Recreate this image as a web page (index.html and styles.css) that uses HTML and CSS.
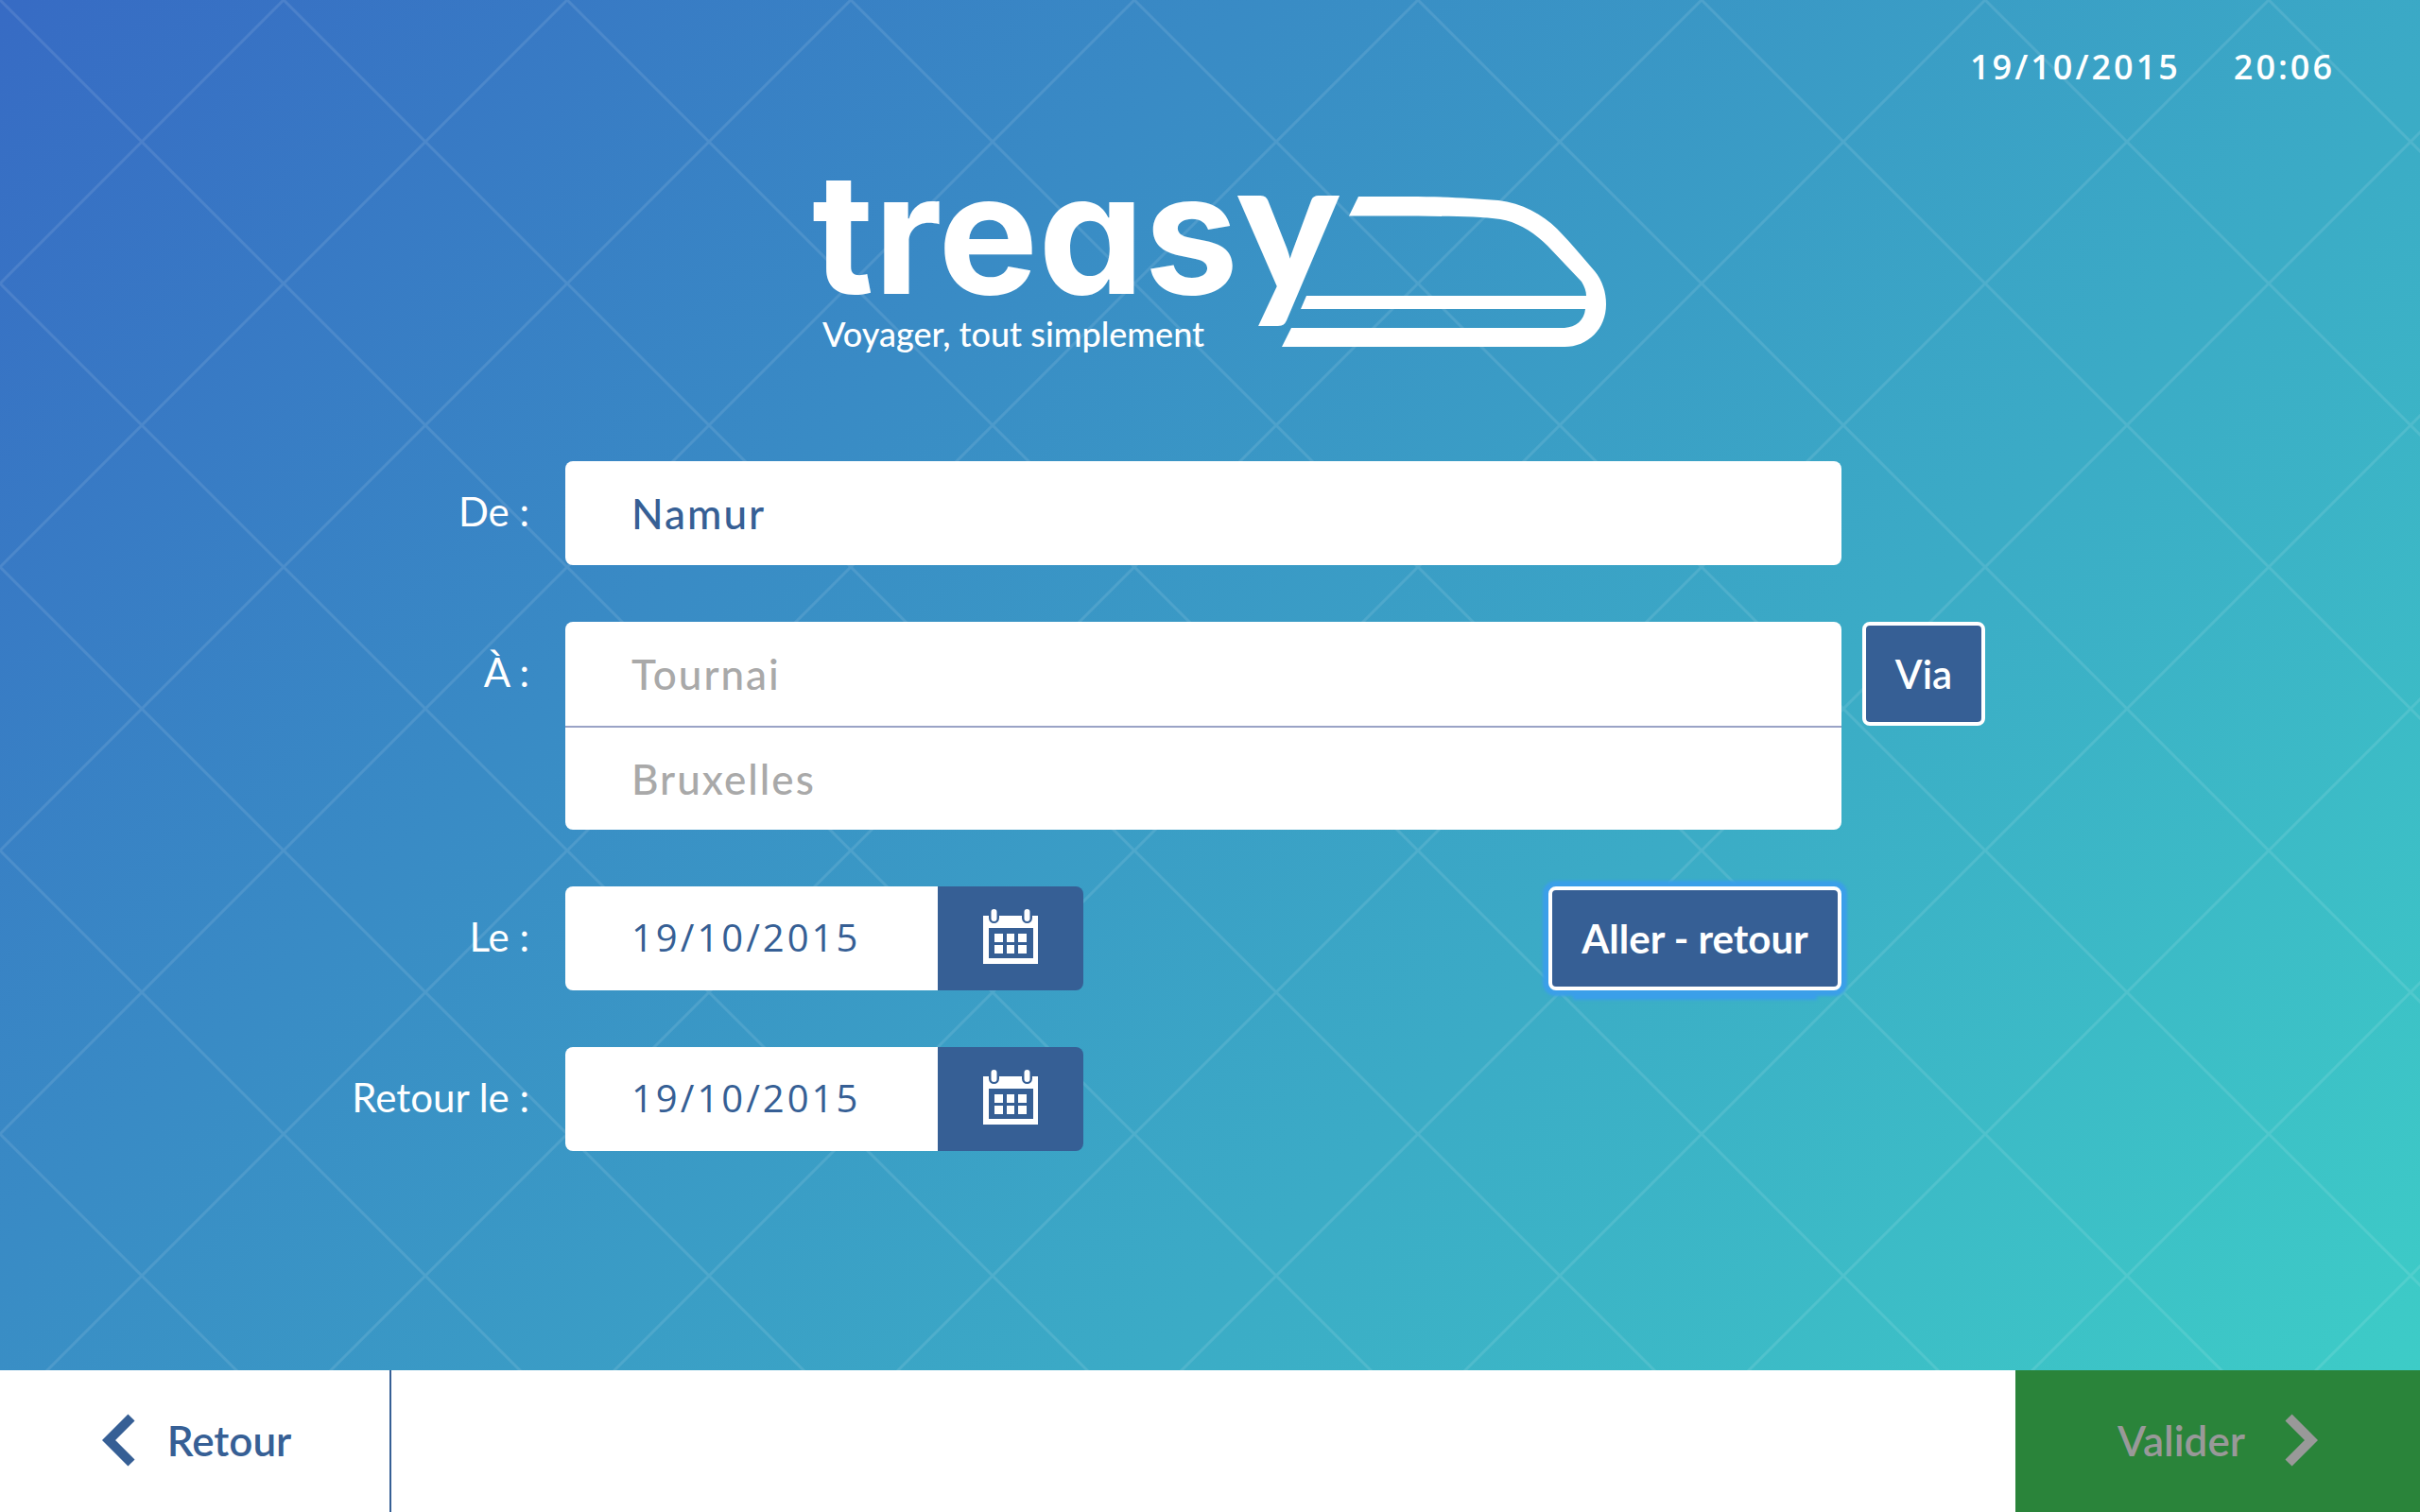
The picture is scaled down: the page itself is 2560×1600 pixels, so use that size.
FILE: index.html
```html
<!DOCTYPE html>
<html lang="fr">
<head>
<meta charset="utf-8">
<meta name="viewport" content="width=device-width, initial-scale=1">
<title>Treasy – Voyager, tout simplement</title>
<link rel="stylesheet" href="styles.css">
</head>
<body>
<main class="screen">
  <header class="clock">
    <time>19/10/2015</time>
    <time>20:06</time>
  </header>

  <svg class="logo" viewBox="860 168 840 204" role="img" aria-label="Treasy, Voyager, tout simplement">
    <text class="logo-name" x="859" y="311">treas<tspan class="logo-y" x="1309">y</tspan></text>
    <text class="logo-tagline" x="870" y="367">Voyager, tout simplement</text>
    <path fill="#fff" d="M1437 208H1490C1528 208 1556 210 1585 212C1610 215 1632 227 1647 242C1661 256 1674 272 1687 287C1695 297 1699 309 1699 322C1699 348 1680 367 1655 367H1356L1366 347H1655C1667 346 1676 339 1677 327H1376L1382 313H1678C1678 308 1676 303 1673 298L1637 260C1622 245 1605 235 1587 232C1566 229 1530 229 1500 228.500H1427Z"/>
  </svg>

  <form class="trip" id="trip">
    <div class="row">
      <label class="row-label" for="from">De :</label>
      <input class="field" id="from" type="text" value="Namur">
    </div>

    <div class="row">
      <label class="row-label" for="to">À :</label>
      <div class="stack">
        <input class="field" id="to" type="text" placeholder="Tournai">
        <input class="field" id="via" type="text" placeholder="Bruxelles" aria-label="Via">
      </div>
      <button class="option option-via" type="button">Via</button>
    </div>

    <div class="row">
      <label class="row-label" for="out">Le :</label>
      <div class="dates">
        <div class="date">
          <input class="date-input" id="out" type="text" value="19/10/2015">
          <button class="date-button" type="button" aria-label="Choisir la date">
            <svg class="calendar" viewBox="0 0 58 58"><use href="#calendar"/></svg>
          </button>
        </div>
        <button class="option option-focus" type="button">Aller - retour</button>
      </div>
    </div>

    <div class="row">
      <label class="row-label" for="back">Retour le :</label>
      <div class="dates">
        <div class="date">
          <input class="date-input" id="back" type="text" value="19/10/2015">
          <button class="date-button" type="button" aria-label="Choisir la date de retour">
            <svg class="calendar" viewBox="0 0 58 58"><use href="#calendar"/></svg>
          </button>
        </div>
      </div>
    </div>
  </form>
</main>

<footer class="bar">
  <button class="bar-button bar-back" type="button">
    <svg class="chevron" viewBox="0 0 35 56"><path d="M31 4L7 28L31 52"/></svg>
    Retour
  </button>
  <button class="bar-button bar-next" type="submit" form="trip" disabled>
    Valider
    <svg class="chevron" viewBox="0 0 35 56"><path d="M4 4L28 28L4 52"/></svg>
  </button>
</footer>

<svg class="symbols" aria-hidden="true">
  <symbol id="calendar" viewBox="0 0 58 58">
    <path fill="#fff" d="M0 7H58V58H0Z"/>
    <path fill="#365f95" d="M6 20H53V52H6Z"/>
    <path fill="#fff" d="M12 26h9v9h-9zM25 26h8v9h-8zM37 26h9v9h-9zM12 38h9v9h-9zM25 38h8v9h-8zM37 38h9v9h-9z"/>
    <path stroke="#365f95" stroke-width="11" stroke-linecap="round" d="M11.500 3V9.500M46.500 3V9.500"/>
    <path stroke="#fff" stroke-width="6" stroke-linecap="round" d="M11.500 3V10M46.500 3V10"/>
  </symbol>
</svg>
</body>
</html>
```
FILE: styles.css
```css
* { box-sizing: border-box; }

body {
  margin: 0;
  min-height: 100vh;
  display: flex;
  flex-direction: column;
  font-family: Lato, "Liberation Sans", sans-serif;
  font-size: 42px;
  color: #fff;
}

button, input { font: inherit; margin: 0; padding: 0; border: 0; }

.screen {
  flex: 1;
  background:
    url("data:image/svg+xml,%3Csvg xmlns='http://www.w3.org/2000/svg' width='300' height='300'%3E%3Cpath d='M-5 -5L305 305M305 -5L-5 305' stroke='%23fff' stroke-opacity='.1' stroke-width='3'/%3E%3C/svg%3E"),
    linear-gradient(135deg, #376bc4, #3dccc7);
}

.clock {
  display: flex;
  justify-content: flex-end;
  gap: 56px;
  padding: 46px 90px 0;
  font-family: "Open Sans", "Noto Sans", sans-serif;
  font-size: 36px;
  font-weight: 600;
  line-height: 50px;
  letter-spacing: 3px;
}

.logo {
  display: block;
  width: 840px;
  max-width: 100%;
  margin: 72px auto 116px;
  overflow: visible;
}

.logo-name {
  font-family: Inter, sans-serif;
  font-size: 178px;
  font-weight: 700;
  font-feature-settings: "cv11";
  fill: #fff;
}

.logo-y {
  font-family: Lato, sans-serif;
  font-size: 202px;
  font-weight: 900;
}

.logo-tagline { font-size: 36px; font-weight: 500; fill: #fff; }

.trip {
  display: grid;
  gap: 60px;
  padding-bottom: 60px;
}

.row {
  display: grid;
  grid-template-columns: minmax(0, 598fr) minmax(0, 1350fr) minmax(0, 612fr);
  align-items: start;
}

.row-label {
  padding-right: 38px;
  line-height: 106px;
  text-align: right;
}

.field, .date-input {
  width: 100%;
  height: 110px;
  color: #365f95;
  background: #fff;
  font-weight: 500;
  letter-spacing: 2px;
}

.field {
  padding: 0 70px;
  border-radius: 8px;
  font-size: 44px;
}

.field::placeholder { color: #a9a9a9; opacity: 1; }

.stack { display: grid; }
.stack .field + .field { border-top: 2px solid #9aa3c6; border-radius: 0 0 8px 8px; }
.stack .field:first-child { border-radius: 8px 8px 0 0; }

.dates {
  display: flex;
  justify-content: space-between;
  align-items: start;
}

.date {
  display: flex;
  width: 548px;
  border-radius: 8px;
  overflow: hidden;
}

.date-input {
  flex: 1;
  min-width: 0;
  padding: 0 70px 4px;
  font-family: "Open Sans", "Noto Sans", sans-serif;
  font-size: 40px;
  letter-spacing: 3px;
}

.date-button {
  display: grid;
  place-items: center;
  width: 154px;
  height: 110px;
  padding-bottom: 4px;
  background: #365f95;
}

.calendar { width: 58px; height: 58px; }

.option {
  height: 110px;
  padding: 0 30px;
  border: 4px solid #fff;
  border-radius: 8px;
  background: #365f95;
  color: #fff;
  font-weight: 700;
}

.option-via {
  justify-self: start;
  width: 130px;
  margin-left: 22px;
  padding: 0;
  font-weight: 600;
}

.option-focus {
  width: 310px;
  padding: 0;
  box-shadow:
    0 0 3px 6px #3b9fe9,
    0 36px 3px -26px #3b9fe9;
}

.bar {
  display: flex;
  justify-content: space-between;
  height: 150px;
  background: #fff;
}

.bar-button {
  display: flex;
  justify-content: center;
  align-items: center;
  gap: 38px;
  padding-bottom: 2px;
  font-size: 44px;
  font-weight: 600;
}

.bar-back {
  gap: 34px;
  width: 414px;
  padding-left: 4px;
  border-right: 2px solid #365f95;
  background: #fff;
  color: #365f95;
}

.bar-next {
  gap: 42px;
  width: 428px;
  background: #2a843a;
  color: #999;
}

.chevron {
  width: 35px;
  height: 56px;
  fill: none;
  stroke: currentColor;
  stroke-width: 10;
}

.symbols { position: absolute; width: 0; height: 0; }
```
